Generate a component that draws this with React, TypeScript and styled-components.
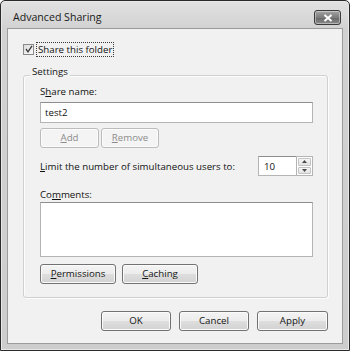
import React from "react";
import styled, { createGlobalStyle } from "styled-components";

const Global = createGlobalStyle`
  html, body { margin: 0; padding: 0; background: #fff; }
  body { font-family: "Open Sans", "Noto Sans", "Liberation Sans", sans-serif; font-size: 9.7px; color: #111; }
`;

const Window = styled.div`
  box-sizing: border-box;
  width: 350px;
  height: 351px;
  border: 1px solid #2a2a2a;
  border-radius: 5px 5px 0 0;
  background: linear-gradient(#e2e2e2, #d2d2d2 27px, #cdcdcd);
  box-shadow: inset 0 0 0 1px #e8e8e8;
  display: flex;
  flex-direction: column;
  padding: 0 6px 6px 6px;
`;

const TitleBar = styled.div`
  height: 27px;
  display: flex;
  align-items: center;
  justify-content: space-between;
  padding: 4px 2px 0 6px;
  box-sizing: border-box;
`;

const Title = styled.span`
  font-size: 10.6px;
  color: #1a1a1a;
  padding-top: 1px;
`;

const CloseBtn = styled.div`
  box-sizing: border-box;
  width: 27px;
  height: 15px;
  margin-top: 2px;
  border: 1px solid #3a3a3a;
  border-radius: 3px;
  background: linear-gradient(#a4a4a4, #7c7c7c 50%, #686868 51%, #8a8a8a);
  box-shadow: inset 0 0 0 1px rgba(255, 255, 255, 0.4);
  display: flex;
  align-items: center;
  justify-content: center;
`;

const Client = styled.div`
  flex: 1;
  box-sizing: border-box;
  border: 1px solid #9c9c9c;
  background: #f1f1f1;
  padding: 12px 14px 11px 15px;
  display: flex;
  flex-direction: column;
`;

const CheckRow = styled.div`
  display: flex;
  align-items: center;
  gap: 3px;
  height: 16px;
`;

const CheckBox = styled.div`
  box-sizing: border-box;
  width: 11px;
  height: 11px;
  border: 1px solid #8a8a8a;
  background: linear-gradient(135deg, #dcdcdc, #fafafa);
  display: flex;
  align-items: center;
  justify-content: center;
`;

const FocusLabel = styled.span`
  outline: 1px dotted #3a3a3a;
  outline-offset: 0;
  padding: 0 1px;
  line-height: 13px;
`;

const Group = styled.div`
  box-sizing: border-box;
  margin-top: 18px;
  height: 223px;
  border: 1px solid #d0d0d0;
  border-radius: 3px;
  box-shadow: inset 1px 1px 0 #fcfcfc, 1px 1px 0 #fcfcfc;
  padding: 0 14px 12px 16px;
  display: flex;
  flex-direction: column;
`;

const Legend = styled.div`
  align-self: flex-start;
  margin: -12px 0 0 -10px;
  padding: 0 2px;
  line-height: 16px;
  background: #f1f1f1;
`;

const Label = styled.div<{ $mt: number }>`
  line-height: 14px;
  margin-top: ${(p) => p.$mt}px;
`;

const TextBox = styled.div<{ $h: number; $mt: number }>`
  box-sizing: border-box;
  height: ${(p) => p.$h}px;
  margin-top: ${(p) => p.$mt}px;
  border: 1px solid #b4b4b4;
  border-top-color: #8e8e8e;
  background: #fff;
  padding: 2px 4px;
  line-height: 15px;
  color: #111;
`;

const Btn = styled.div<{ $w: number; $disabled?: boolean }>`
  box-sizing: border-box;
  width: ${(p) => p.$w}px;
  height: 20px;
  border: 1px solid ${(p) => (p.$disabled ? "#bcbcbc" : "#727272")};
  border-radius: 3px;
  background: ${(p) =>
    p.$disabled
      ? "#f4f4f4"
      : "linear-gradient(#f4f4f4, #ececec 48%, #dedede 52%, #d2d2d2)"};
  box-shadow: inset 0 0 0 1px #fbfbfb;
  color: ${(p) => (p.$disabled ? "#8c8c8c" : "#141414")};
  display: flex;
  align-items: center;
  justify-content: center;
  line-height: 14px;
`;

const Row = styled.div<{ $gap: number; $mt: number }>`
  display: flex;
  align-items: center;
  gap: ${(p) => p.$gap}px;
  margin-top: ${(p) => p.$mt}px;
`;

const Spacer = styled.div`
  flex: 1;
`;

const Spin = styled.div`
  display: flex;
  height: 20px;
`;

const SpinBox = styled.div`
  box-sizing: border-box;
  width: 38px;
  height: 20px;
  border: 1px solid #b4b4b4;
  border-top-color: #8e8e8e;
  border-right: none;
  background: #fff;
  padding: 2px 5px;
  line-height: 15px;
  color: #111;
`;

const SpinBtns = styled.div`
  box-sizing: border-box;
  display: flex;
  flex-direction: column;
  width: 17px;
  border: 1px solid #b4b4b4;
  background: #fff;
  padding: 1px;
  gap: 1px;
`;

const SpinBtn = styled.div`
  flex: 1;
  border: 1px solid #c4c4c4;
  border-radius: 1px;
  background: linear-gradient(#f6f6f6, #e2e2e2);
  display: flex;
  align-items: center;
  justify-content: center;
`;

const Footer = styled.div`
  display: flex;
  justify-content: flex-end;
  gap: 8px;
  margin-top: 13px;
`;

const U = styled.span`
  text-decoration: underline;
  text-underline-offset: 1px;
`;

export default function App() {
  return (
    <>
      <Global />
      <Window>
        <TitleBar>
          <Title>Advanced Sharing</Title>
          <CloseBtn>
            <svg width="10" height="8" viewBox="0 0 10 8">
              <path d="M1.5 1 L8.5 7 M8.5 1 L1.5 7" stroke="#fff" strokeWidth="2" />
            </svg>
          </CloseBtn>
        </TitleBar>
        <Client>
          <CheckRow>
            <CheckBox>
              <svg width="8" height="8" viewBox="0 0 8 8">
                <path d="M1 4 L3 6.8 L7 0.8" stroke="#3a3a3a" strokeWidth="1.3" fill="none" />
              </svg>
            </CheckBox>
            <FocusLabel>Share this folder</FocusLabel>
          </CheckRow>
          <Group>
            <Legend>Settings</Legend>
            <Label $mt={5}>
              S<U>h</U>are name:
            </Label>
            <TextBox $h={21} $mt={3}>
              test2
            </TextBox>
            <Row $gap={2} $mt={5}>
              <Btn $w={59} $disabled>
                <U>A</U>dd
              </Btn>
              <Btn $w={58} $disabled>
                <U>R</U>emove
              </Btn>
            </Row>
            <Row $gap={0} $mt={8}>
              <span>
                <U>L</U>imit the number of simultaneous users to:
              </span>
              <Spacer />
              <Spin>
                <SpinBox>10</SpinBox>
                <SpinBtns>
                  <SpinBtn>
                    <svg width="5" height="3" viewBox="0 0 5 3">
                      <path d="M0 3 L2.5 0 L5 3Z" fill="#4a4a4a" />
                    </svg>
                  </SpinBtn>
                  <SpinBtn>
                    <svg width="5" height="3" viewBox="0 0 5 3">
                      <path d="M0 0 L2.5 3 L5 0Z" fill="#4a4a4a" />
                    </svg>
                  </SpinBtn>
                </SpinBtns>
              </Spin>
            </Row>
            <Label $mt={12}>
              Co<U>m</U>ments:
            </Label>
            <TextBox $h={55} $mt={0} />
            <Row $gap={6} $mt={7}>
              <Btn $w={76}>
                <U>P</U>ermissions
              </Btn>
              <Btn $w={76}>
                <U>C</U>aching
              </Btn>
            </Row>
          </Group>
          <Footer>
            <Btn $w={70}>OK</Btn>
            <Btn $w={70}>Cancel</Btn>
            <Btn $w={71}>Apply</Btn>
          </Footer>
        </Client>
      </Window>
    </>
  );
}
